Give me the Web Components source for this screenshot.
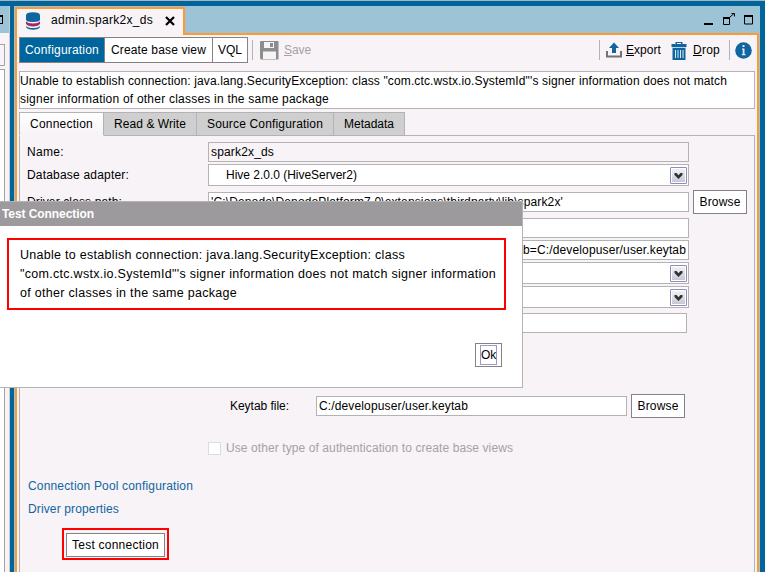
<!DOCTYPE html>
<html lang="en">
<head>
<meta charset="utf-8">
<title>admin.spark2x_ds</title>
<style>
html,body{margin:0;width:765px;height:572px;overflow:hidden}
body{font:12px/14px "Liberation Sans",Arial,sans-serif;color:#000}
</style>
</head>
<body>
<ds-workspace></ds-workspace>
<script>
const define=(name,html,init)=>customElements.define(name,class extends HTMLElement{
  connectedCallback(){
    if(this.shadowRoot)return;
    const t=document.createElement('template');
    t.innerHTML='<style>*{box-sizing:border-box}:host{box-sizing:border-box}</style>'+html;
    this.attachShadow({mode:'open'}).append(t.content.cloneNode(true));
    if(init)init(this,this.shadowRoot);
  }
});

/* One line of text, tracked so that it spans the width given in "w". */
define('ui-text',`<style>:host{display:block;white-space:pre;height:14px;line-height:14px;flex:none;width:max-content}span{display:inline-block;white-space:pre}</style><span><slot></slot></span>`,(el,root)=>{
  const w=+el.getAttribute('w');
  if(!w)return;
  const s=root.querySelector('span'),n=el.textContent.length;
  s.style.letterSpacing=((w-s.getBoundingClientRect().width)/n)+'px';
});

define('ui-button',`<style>
:host{display:flex;flex:none;align-items:center;justify-content:center;height:24px;border:1px solid #848284;background:#fff}
:host([focused]) div{border:1px solid #9c9ace;height:20px;padding:2px 0 0;width:17px;display:flex;justify-content:center}
</style><div><slot></slot></div>`);

define('ui-field',`<style>
:host{display:flex;flex:none;align-items:center;width:481px;height:20px;border:1px solid #b5b2b5;background:#fff;padding:0 2px}
:host([readonly]){background:#f7f3f7}
:host([end]){justify-content:flex-end}
</style><slot></slot>`);

define('ui-select',`<style>
:host{display:flex;flex:none;align-items:center;justify-content:space-between;width:481px;height:22px;border:1px solid #b5b2b5;background:#fff;padding:0 1px 0 17px}
i{display:block;width:17px;height:17px;border:1px solid #8c8eb5;border-radius:1px;box-shadow:inset 0 0 0 1px #fff;background:linear-gradient(#f4f4f7,#c4c4d2)}
svg{display:block}
</style><div><slot></slot></div><i><svg width="15" height="15"><path d="M3.5 5h2l2 2.3 2-2.3h2v2l-4 4-4-4z" fill="#313031"/></svg></i>`);

define('ui-icon',`<style>:host{display:block;flex:none}svg{display:block}</style>`,(el,root)=>{
  const icons={
    db:[16,18,'<path d="M1 3.500Q1 .3 8 .3t7 3.200v4q0 2.500-7 2.500T1 7.500z" fill="#1065a0"/><path d="M1 9.300q2 2.200 7 2.200t7-2.200v2.500q-1.500 2.700-7 2.700t-7-2.700z" fill="#a52862"/><path d="M1 14q2 2 7 2t7-2v1q-1.500 2.700-7 2.700T1 15z" fill="#1065a0"/>'],
    close:[10,10,'<path d="M1 1l8 8M9 1L1 9" stroke="#000" stroke-width="2.200"/>'],
    save:[19,19,'<path d="M.5 0H18a.5.5 0 0 1 .5.5v18h-18L0 16V.5z" fill="#8c8e8c"/><path d="M4 1h10v6H4zM3 10.500h13v7.500H3z" fill="#f7f3f7"/><path d="M10 2h3v4h-3z" fill="#8c8e8c"/>'],
    exp:[16,16,'<path d="M8 .5L13 6h-3v5H6V6H3z" fill="#1065a0"/><path d="M1 9v5.500h14V9" fill="none" stroke="#737173" stroke-width="2"/>'],
    trash:[16,18,'<path d="M4.500 0h7v2h4v3H.5V2h4zm1.500 1v1h4V1zM1.500 6h13v12h-13z" fill="#1065a0"/><path d="M4.500 8v8M7 8v8M9.500 8v8M12 8v8" stroke="#dce8f0"/><path d="M1 5.500h14" stroke="#bdd3e2"/>'],
    info:[17,17,'<circle cx="8.500" cy="8.500" r="8.300" fill="#1065a0"/><path d="M7.500 3h2v2h-2zM7 6.500h2.500V12h1v1.300H6.800V12h.9V7.800H7z" fill="#dce8f0"/>'],
    win:[49,13,'<path d="M0 11h9" stroke="#000" stroke-width="2"/><path d="M19.500 5.500h6v6h-6z" fill="none" stroke="#000"/><path d="M19 5h7" stroke="#000" stroke-width="2"/><path d="M26 4l4-3.500M27.500.5h3v3" fill="none" stroke="#000"/><path d="M40.500 3h8v8h-8z" fill="none" stroke="#000"/><path d="M40 3h9" stroke="#000" stroke-width="2"/>']
  };
  const [w,h,p]=icons[el.getAttribute('name')];
  root.innerHTML+=`<svg width="${w}" height="${h}" viewBox="0 0 ${w} ${h}">${p}</svg>`;
});

define('side-panel',`<style>
:host{display:flex;flex-direction:column;width:10px;flex:none;background:#f7f3f7;border-right:1px solid #c6cbd0}
header{height:27px;background:#9cc3d6;padding-top:9px}
header i{display:block;width:3px;height:9px;border:1px solid #000;border-left:0;border-top-width:2px}
.a{width:5px;height:22px;margin-top:11px;border:1px solid #a5a2a5;border-left:0}
.b{width:5px;flex:1;margin-top:3px;border:1px solid #a5a2a5;border-left:0;border-bottom:0;background:#fff}
</style><header><i></i></header><div class="a"></div><div class="b"></div>`);

define('editor-tabbar',`<style>
:host{display:flex;height:29px;background:#9cc3d6;flex:none}
.tab{width:170px;margin-top:1px;border:2px solid #ff9a31;border-bottom:0;background:#f7f3f7;display:flex;align-items:flex-start;padding:3px 0 0 8px}
.rest{flex:1;border-bottom:2px solid #ff9a31;display:flex;justify-content:flex-end;padding:7px 6px 0 0}
.tab ui-text{margin:1px 12px 0 10px}.tab ui-icon+ui-text+ui-icon{margin-top:4px}
</style><div class="tab"><ui-icon name="db"></ui-icon><ui-text w="102">admin.spark2x_ds</ui-text><ui-icon name="close"></ui-icon></div><div class="rest"><ui-icon name="win"></ui-icon></div>`);

define('editor-toolbar',`<style>
:host{display:flex;align-items:center;height:26px;margin-top:2px;flex:none}
.g{display:flex;border:1px solid #848284;height:26px}
.g>div{display:flex;align-items:center;justify-content:center;background:#fff;border-right:1px solid #848284}
.g>div:last-child{border:0}.g .on{background:#00659c;color:#fff}
.sep{width:1px;height:20px;background:#b5b2b5}
.off{color:#a5a2a5}
u{text-underline-offset:1px}
</style>
<div class="g"><div class="on" style="width:85px"><ui-text w="74">Configuration</ui-text></div><div style="width:108px"><ui-text w="95">Create base view</ui-text></div><div style="width:34px"><ui-text w="24">VQL</ui-text></div></div>
<div class="sep" style="margin:0 7px 0 4px"></div><ui-icon name="save" style="margin-right:5px"></ui-icon><ui-text class="off" w="27"><u>S</u>ave</ui-text>
<div class="sep" style="margin-left:auto"></div><ui-icon name="exp" style="margin:0 4px 0 6px"></ui-icon><ui-text w="35"><u>E</u>xport</ui-text>
<ui-icon name="trash" style="margin:2px 6px 0 10px"></ui-icon><ui-text w="27"><u>D</u>rop</ui-text>
<div class="sep" style="margin:0 5px 0 9px"></div><ui-icon name="info" style="margin:1px 3px 0 0"></ui-icon>`);

define('error-message',`<style>
:host{display:block;height:38px;margin-top:8px;border:1px solid #b5b2b5;background:#fff;padding:2px 0 0;flex:none}
ui-text+ui-text{margin-top:4px}
</style><ui-text w="707">Unable to establish connection: java.lang.SecurityException: class "com.ctc.wstx.io.SystemId"'s signer information does not match</ui-text><ui-text w="309">signer information of other classes in the same package</ui-text>`);

define('section-tabs',`<style>
:host{display:flex;height:24px;margin-top:3px;flex:none}
div{display:flex;align-items:center;justify-content:center;border:1px solid #b5b2b5;border-left:0;background:#cecfce}
.on{border-left:1px solid #b5b2b5;border-bottom-color:transparent;background:linear-gradient(#fff,#f7f3f7) padding-box}
.end{flex:1;border-width:0 0 1px;background:none}
</style><div class="on" style="width:85px"><ui-text w="63">Connection</ui-text></div><div style="width:93px"><ui-text w="72">Read &amp; Write</ui-text></div><div style="width:137px"><ui-text w="116">Source Configuration</ui-text></div><div style="width:71px"><ui-text w="50">Metadata</ui-text></div><div class="end"></div>`);

define('form-row',`<style>
:host{display:flex;align-items:center;height:20px;flex:none}
.l{width:181px;flex:none}
</style><div class="l"><slot name="label"></slot></div><slot></slot>`);

define('connection-form',`<style>
:host{display:flex;flex-direction:column;flex:1;border:1px solid #b5b2b5;border-width:0 1px;padding:6px 0 0 7px}
.link{color:#1065a0;margin-left:1px}
.off{color:#a5a2a5;margin-left:5px}
.check{width:13px;height:13px;border:1px solid #dedbde;background:#fff;margin-left:181px}
.test{width:107px;height:32px;margin:12px 0 0 35px;border:2px solid #f00;display:flex;align-items:flex-end;padding-bottom:1px;justify-content:center;flex:none}
.row{display:flex;align-items:center;flex:none}
</style>
<form-row><ui-text slot="label" w="37">Name:</ui-text><ui-field readonly><ui-text w="63">spark2x_ds</ui-text></ui-field></form-row>
<form-row style="height:22px;margin-top:2px"><ui-text slot="label" w="102">Database adapter:</ui-text><ui-select><ui-text w="131">Hive 2.0.0 (HiveServer2)</ui-text></ui-select></form-row>
<form-row style="margin-top:6px"><ui-text slot="label" w="95">Driver class path:</ui-text><ui-field><ui-text w="352">'C:\\Denodo\\DenodoPlatform7.0\\extensions\\thirdparty\\lib\\spark2x'</ui-text></ui-field><ui-button style="width:54px;margin-left:4px"><ui-text w="41">Browse</ui-text></ui-button></form-row>
<form-row style="margin-top:6px"><ui-field></ui-field></form-row>
<form-row style="margin-top:2px"><ui-field end><ui-text w="163">b=C:/developuser/user.keytab</ui-text></ui-field></form-row>
<form-row style="height:22px;margin-top:2px"><ui-select></ui-select></form-row>
<form-row style="height:22px;margin-top:2px"><ui-select></ui-select></form-row>
<form-row style="margin-top:5px"><ui-field style="width:479px"></ui-field></form-row>
<div class="row" style="height:24px;margin:61px 0 0 203px"><div style="width:86px"><ui-text w="59">Keytab file:</ui-text></div><ui-field style="width:311px"><ui-text w="149">C:/developuser/user.keytab</ui-text></ui-field><ui-button style="width:54px;margin-left:4px"><ui-text w="41">Browse</ui-text></ui-button></div>
<div class="row" style="height:14px;margin-top:23px"><div class="check"></div><ui-text class="off" w="287">Use other type of authentication to create base views</ui-text></div>
<ui-text class="link" style="margin-top:24px" w="165">Connection Pool configuration</ui-text>
<ui-text class="link" style="margin-top:9px" w="91">Driver properties</ui-text>
<div class="test"><ui-button style="width:99px"><ui-text w="87">Test connection</ui-text></ui-button></div>`);

define('test-dialog',`<style>
:host{display:flex;flex-direction:column;position:absolute;left:0;top:201px;width:523px;height:187px;background:#fff;border:1px solid #b5b2b5;border-left:0}
header{height:24px;background:#9c9a9c;color:#fff;font-weight:bold;padding:5px 0 0 2px;flex:none}
.msg{width:499px;height:72px;margin:12px 0 0 7px;border:2px solid #f00;padding:8px 0 0 11px;font-size:12.5px}
ui-text+ui-text{margin-top:5px}
ui-button{width:27px;margin:33px 0 0 475px}
</style><header><ui-text w="92">Test Connection</ui-text></header>
<div class="msg"><ui-text w="385">Unable to establish connection: java.lang.SecurityException: class</ui-text><ui-text w="476">"com.ctc.wstx.io.SystemId"'s signer information does not match signer information</ui-text><ui-text w="217">of other classes in the same package</ui-text></div>
<ui-button focused><ui-text w="15">Ok</ui-text></ui-button>`);

define('ds-workspace',`<style>
:host{display:flex;position:relative;width:765px;height:572px;border-top:1px solid #adb6bd;padding:5px 5px 0 0;background:#00659c;overflow:hidden}
main{margin-left:4px;flex:1;min-width:0;display:flex;flex-direction:column;border:1px solid #9cc3d6;border-width:0 1px;background:#f7f3f7}
.body{flex:1;border:2px solid #ff9a31;border-width:0 2px;display:flex;flex-direction:column;padding:0 2px}
test-dialog{margin-top:-1px}
</style><side-panel></side-panel><main><editor-tabbar></editor-tabbar><div class="body"><editor-toolbar></editor-toolbar><error-message></error-message><section-tabs></section-tabs><connection-form></connection-form></div></main><test-dialog></test-dialog>`);
</script>
</body>
</html>
